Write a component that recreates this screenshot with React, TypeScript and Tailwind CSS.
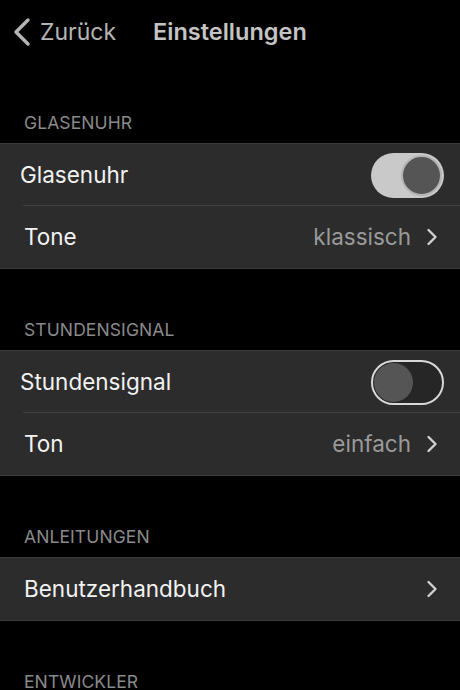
import { ReactNode } from 'react';

const font = { fontFamily: 'Inter, "Noto Sans", sans-serif' };

function Chevron({ className = '' }: { className?: string }) {
  return (
    <svg className={className} width="12" height="20" viewBox="0 0 12 20" fill="none">
      <path d="M2.5 3l7 7-7 7" stroke="currentColor" strokeWidth={2.4} strokeLinecap="round" strokeLinejoin="round" />
    </svg>
  );
}

function Toggle({ on }: { on: boolean }) {
  return on ? (
    <div className="w-[73px] h-[45px] rounded-full bg-[#c9c9c9] flex items-center justify-end pr-[2px]">
      <div className="w-[41px] h-[41px] rounded-full bg-[#555555] border-2 border-[#b4b4b4]" />
    </div>
  ) : (
    <div className="w-[73px] h-[45px] rounded-full border-2 border-[#d8d8d8] bg-[#262626] flex items-center pl-[1px]">
      <div className="w-[39px] h-[39px] rounded-full bg-[#555555]" />
    </div>
  );
}

function SectionHeader({ title, first }: { title: string; first?: boolean }) {
  return (
    <div className={`${first ? 'h-[79px]' : 'h-[81px]'} flex items-end px-6 pb-[10px]`}>
      <span className="text-[17.5px] leading-5 tracking-[0.1px] text-[#8a8a8a]">{title}</span>
    </div>
  );
}

function Row({ label, children, labelX = 'pl-6' }: { label: string; children?: ReactNode; labelX?: string }) {
  return (
    <div className="h-[62px] flex items-center justify-between pr-4">
      <span className={`${labelX} text-[22.5px] text-[#f2f2f2]`}>{label}</span>
      <div className="flex items-center">{children}</div>
    </div>
  );
}

function ToggleRow({ label, on }: { label: string; on: boolean }) {
  return (
    <div className="relative h-[62px] flex items-center justify-between pr-4">
      <span className="pl-5 text-[22.5px] text-[#f2f2f2]">{label}</span>
      <Toggle on={on} />
      <div className="absolute left-[23px] right-0 bottom-0 h-px bg-[#414141]" />
    </div>
  );
}

function Detail({ value }: { value?: string }) {
  return (
    <div className="flex items-center gap-[15px] pr-[6px]">
      {value && <span className="text-[22.5px] text-[#9a9a9a]">{value}</span>}
      <Chevron className="text-[#d0d0d0]" />
    </div>
  );
}

function Group({ children }: { children: ReactNode }) {
  return <div className="bg-[#2c2c2c] border-y border-[#3c3c3c]">{children}</div>;
}

export default function App() {
  return (
    <div className="w-[460px] h-[690px] overflow-hidden bg-black" style={font}>
      {/* Nav bar */}
      <div className="h-[64px] flex items-center">
        <div className="flex items-center pl-[12px] text-[#b5b5b5]">
          <svg width="20" height="30" viewBox="0 0 20 30" fill="none">
            <path d="M16 3L4 15l12 12" stroke="currentColor" strokeWidth={3.4} strokeLinecap="round" strokeLinejoin="round" />
          </svg>
          <span className="ml-[8px] text-[23px]">Zurück</span>
        </div>
        <span className="ml-[37px] text-[23.5px] font-semibold text-[#c4c4c4]">Einstellungen</span>
      </div>

      <SectionHeader title="GLASENUHR" first />
      <Group>
        <ToggleRow label="Glasenuhr" on />
        <Row label="Tone">
          <Detail value="klassisch" />
        </Row>
      </Group>

      <SectionHeader title="STUNDENSIGNAL" />
      <Group>
        <ToggleRow label="Stundensignal" on={false} />
        <Row label="Ton">
          <Detail value="einfach" />
        </Row>
      </Group>

      <SectionHeader title="ANLEITUNGEN" />
      <Group>
        <Row label="Benutzerhandbuch">
          <Detail />
        </Row>
      </Group>

      <SectionHeader title="ENTWICKLER" />
    </div>
  );
}
